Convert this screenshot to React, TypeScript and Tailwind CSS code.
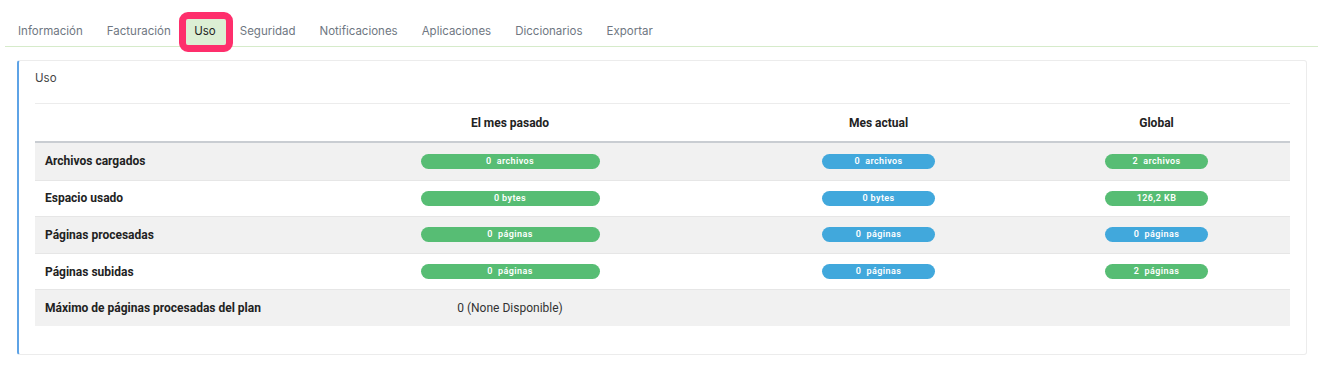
const tabs = [
  "Información",
  "Facturación",
  "Uso",
  "Seguridad",
  "Notificaciones",
  "Aplicaciones",
  "Diccionarios",
  "Exportar",
];

type Bar = { text: string; color: "green" | "blue" };

type Row = {
  label: string;
  cells: (Bar | null)[];
  plain?: string;
};

const rows: Row[] = [
  {
    label: "Archivos cargados",
    cells: [
      { text: "0  archivos", color: "green" },
      { text: "0  archivos", color: "blue" },
      { text: "2  archivos", color: "green" },
    ],
  },
  {
    label: "Espacio usado",
    cells: [
      { text: "0 bytes", color: "green" },
      { text: "0 bytes", color: "blue" },
      { text: "126,2 KB", color: "green" },
    ],
  },
  {
    label: "Páginas procesadas",
    cells: [
      { text: "0  páginas", color: "green" },
      { text: "0  páginas", color: "blue" },
      { text: "0  páginas", color: "blue" },
    ],
  },
  {
    label: "Páginas subidas",
    cells: [
      { text: "0  páginas", color: "green" },
      { text: "0  páginas", color: "blue" },
      { text: "2  páginas", color: "green" },
    ],
  },
  {
    label: "Máximo de páginas procesadas del plan",
    cells: [null, null, null],
    plain: "0 (None Disponible)",
  },
];

const barWidths = ["w-[179px]", "w-[113px]", "w-[103px]"];

const Pill = ({ bar, width }: { bar: Bar; width: string }) => (
  <div
    className={`${width} h-[15px] rounded-full flex items-center justify-center text-white text-[9px] font-semibold tracking-[0.4px] whitespace-pre ${
      bar.color === "green" ? "bg-[#57bd74]" : "bg-[#41a8dc]"
    }`}
  >
    {bar.text}
  </div>
);

export default function App() {
  return (
    <div className="bg-white w-[1321px] h-[365px] font-['Roboto',sans-serif]">
      {/* tab bar */}
      <div className="mx-[5px] w-[1313px] pt-[19px] pl-[1px] flex border-b border-[#d6ebca] font-['Inter',sans-serif] text-[11.5px] text-[#6f7782]">
        {tabs.map((t) =>
          t === "Uso" ? (
            <div key={t} className="h-[27px] ml-[3.5px] mr-[2px]">
              <div className="h-[26px] pl-[8px] pr-[10px] flex items-center bg-[#dcefd4] text-[#222] rounded-[2px] outline-[7px] outline-solid outline-[#fe2f6c]">
                {t}
              </div>
            </div>
          ) : (
            <div key={t} className="h-[27px] px-[12px] flex items-center pb-[1px]">
              {t}
            </div>
          ),
        )}
      </div>

      {/* panel */}
      <div className="mt-[13px] ml-[17px] w-[1290px] h-[295px] border border-[#ececec] border-l-2 border-l-[#5ea3e6] rounded-[3px] px-[16px]">
        <div className="h-[43px] pt-[9px] border-b border-[#ececec] text-[11.5px] text-[#444] font-['Inter',sans-serif]">
          Uso
        </div>

        <div className="grid grid-cols-[251px_448px_289px_267px] h-[39px] items-center text-[12px] font-bold text-[#222] border-b-2 border-[#c9cdd2]">
          <div />
          <div className="text-center">El mes pasado</div>
          <div className="text-center">Mes actual</div>
          <div className="text-center">Global</div>
        </div>

        {rows.map((r, i) => (
          <div
            key={r.label}
            className={`grid grid-cols-[251px_448px_289px_267px] h-[36.6px] items-center ${
              i > 0 ? "border-t border-[#e6e6e6]" : ""
            } ${i % 2 === 0 ? "bg-[#f1f1f1]" : "bg-white"}`}
          >
            <div className="pl-[10px] text-[12px] font-bold text-[#222]">{r.label}</div>
            {r.plain ? (
              <div className="text-center text-[12px] text-[#333]">{r.plain}</div>
            ) : (
              r.cells.map((c, j) => (
                <div key={j} className="flex justify-center">
                  {c && <Pill bar={c} width={barWidths[j]} />}
                </div>
              ))
            )}
            {r.plain && (
              <>
                <div />
                <div />
              </>
            )}
          </div>
        ))}
      </div>
    </div>
  );
}
